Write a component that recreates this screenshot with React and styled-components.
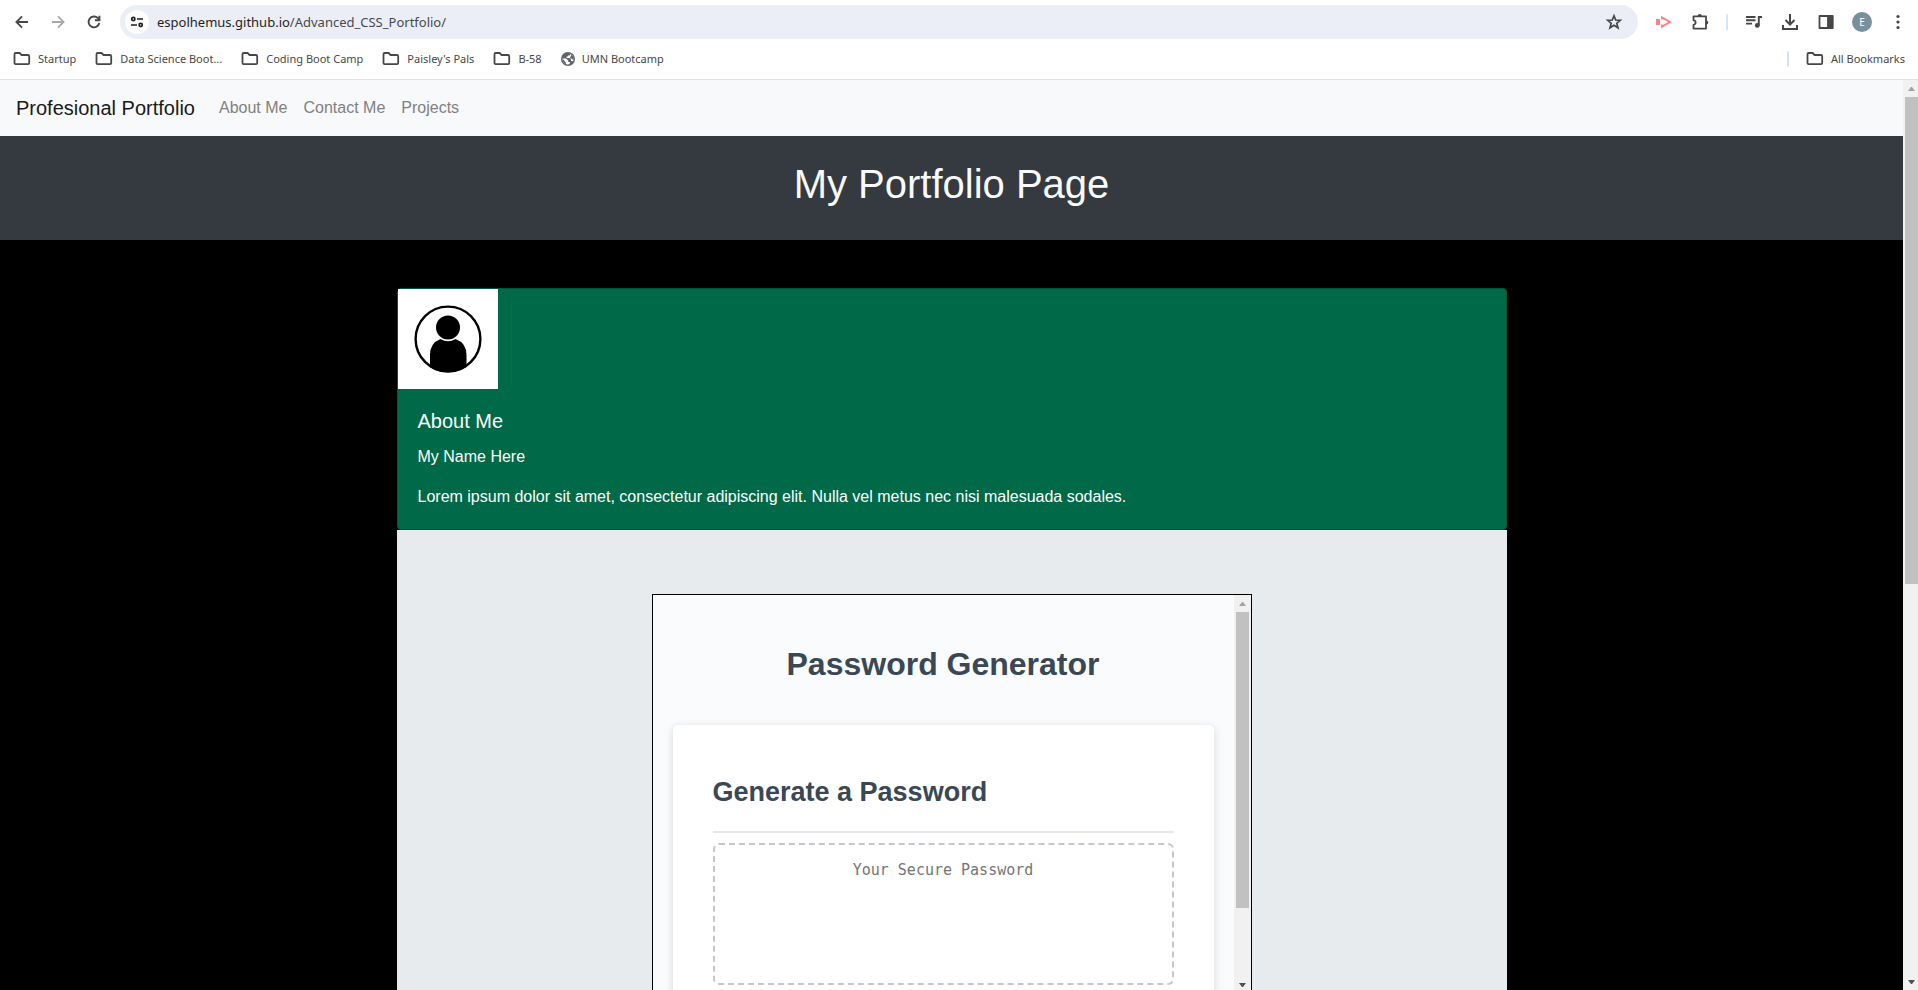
import React from "react";
import styled, { createGlobalStyle } from "styled-components";

const Global = createGlobalStyle`
  *, *::before, *::after { box-sizing: border-box; }
  html, body { margin: 0; height: 100%; }
  body { font-family: "Liberation Sans", Arial, sans-serif; font-size: 16px; line-height: 24px; color: #212529; overflow: hidden; background: #fff; }
  h1, h2, p { margin: 0; }
  a { color: inherit; text-decoration: none; }
  button { border: 0; padding: 0; background: none; font: inherit; color: inherit; }
  svg { display: block; flex: none; }
`;

const Window = styled.div`
  display: flex;
  flex-direction: column;
  height: 100vh;
`;

/* ---------- browser chrome ---------- */

const Chrome = styled.header`
  flex: none;
  border-bottom: 1px solid #dfe1e5;
  background: #fff;
  color: #474747;
  font-family: "Noto Sans", "Open Sans", sans-serif;
`;

const Toolbar = styled.div`
  display: flex;
  align-items: center;
  height: 44px;
  padding: 0 2px 0 4px;
`;

const IconButton = styled.button`
  display: grid;
  place-items: center;
  flex: none;
  width: 36px;
  height: 34px;
  color: ${(p) => (p.$dim ? "#a9a9a9" : "#474747")};
`;

const NavButtons = styled.div`
  display: flex;
  margin-right: 8px;
`;

const AddressBar = styled.form`
  display: flex;
  align-items: center;
  flex: 1;
  height: 34px;
  padding: 0 6px 0 5px;
  border-radius: 17px;
  background: #ebeef7;
`;

const SiteInfo = styled.button`
  display: grid;
  place-items: center;
  width: 24px;
  height: 24px;
  border-radius: 50%;
  background: #fff;
  color: #1f1f1f;
`;

const Url = styled.p`
  flex: 1;
  margin: 0 8px;
  font-size: 13px;
  line-height: 20px;
  color: #47494d;
  b { font-weight: 400; color: #1f1f1f; }
`;

const Separator = styled.span`
  flex: none;
  width: 2px;
  height: 16px;
  margin: ${(p) => p.$margin};
  border-radius: 1px;
  background: #d3e3fd;
`;

const Actions = styled.div`
  display: flex;
  align-items: center;
  margin-left: 8px;
`;

const Avatar = styled.span`
  display: grid;
  place-items: center;
  width: 20px;
  height: 20px;
  border-radius: 50%;
  background: #78909c;
  color: #fff;
  font-size: 10px;
  line-height: 20px;
`;

const Bookmarks = styled.nav`
  display: flex;
  align-items: center;
  height: 35px;
  padding: 0 13px 5px;
  gap: 19px;
`;

const Bookmark = styled.a`
  display: flex;
  align-items: center;
  gap: 7px;
  font-size: 11px;
  line-height: 16px;
  white-space: nowrap;
`;

const Spacer = styled.span`
  flex: 1;
`;

/* ---------- scroll bars ---------- */

const Track = styled.div`
  display: flex;
  flex-direction: column;
  flex: none;
  width: ${(p) => p.$width}px;
  padding-left: 2px;
  padding-right: ${(p) => p.$width - 15}px;
  background: #f1f1f1;
`;

const TrackButton = styled.button`
  display: grid;
  place-items: center;
  flex: none;
  height: 17px;
  color: ${(p) => (p.$active ? "#505050" : "#a3a3a3")};
`;

const Lane = styled.div`
  display: flex;
  flex-direction: column;
  flex: 1;
`;

const Thumb = styled.div`
  flex: ${(p) => p.$shown};
  background: #c1c1c1;
`;

const Rest = styled.div`
  flex: ${(p) => p.$hidden};
`;

function ScrollBar({ width, shown, hidden }) {
  return (
    <Track $width={width}>
      <TrackButton aria-label="Scroll up">
        <svg width="7" height="4" viewBox="0 0 7 4"><path d="M0 4 3 0h1l3 4z" fill="currentColor" /></svg>
      </TrackButton>
      <Lane>
        <Thumb $shown={shown} />
        <Rest $hidden={hidden} />
      </Lane>
      <TrackButton $active aria-label="Scroll down">
        <svg width="7" height="4" viewBox="0 0 7 4"><path d="M0 0h7L4 4H3z" fill="currentColor" /></svg>
      </TrackButton>
    </Track>
  );
}

/* ---------- page ---------- */

const Viewport = styled.div`
  display: flex;
  flex: 1;
  min-height: 0;
`;

const Page = styled.div`
  flex: 1;
  min-width: 0;
  overflow: hidden;
  background: #000;
`;

const NavBar = styled.nav`
  display: flex;
  align-items: center;
  height: 56px;
  padding: 0 16px;
  gap: 16px;
  background: #f8f9fa;
`;

const Brand = styled.a`
  font-size: 20px;
  line-height: 30px;
  color: #1a1a1a;
  margin-right: 8px;
`;

const NavLink = styled.a`
  color: #808182;
`;

const Hero = styled.header`
  padding: 24px 24px 32px;
  background: #343a40;
  color: #f8f9fa;
  text-align: center;
  h1 { font-size: 40px; line-height: 48px; font-weight: 400; }
`;

const Container = styled.main`
  max-width: 1110px;
  margin: 48px auto 0;
`;

const Card = styled.section`
  border: 1px solid #005636;
  border-radius: 4px;
  background: #006947;
  color: #fff;
`;

const Portrait = styled.svg`
  width: 100px;
  height: 100px;
  background: #fff;
`;

const CardBody = styled.div`
  padding: 20px;
  h2 { font-size: 20px; line-height: 24px; font-weight: 400; margin-bottom: 12px; }
  p + p { margin-top: 16px; }
`;

const Showcase = styled.section`
  display: flex;
  justify-content: center;
  padding: 64px 0;
  background: #e8ebee;
`;

const Frame = styled.div`
  display: flex;
  width: 600px;
  height: 400px;
  border: 1px solid #000;
  background: #fafbfd;
`;

const FramePage = styled.div`
  flex: 1;
  min-width: 0;
  overflow: hidden;
  padding: 0 20px;
  color: #3a4754;
`;

const AppTitle = styled.h1`
  padding: 53px 0 45px;
  font-size: 32px;
  line-height: 32px;
  text-align: center;
`;

const Panel = styled.div`
  padding: 50px 40px 40px;
  border-radius: 5px;
  background: #fff;
  box-shadow: rgba(0, 0, 0, 0.15) 0 2px 9px;
`;

const PanelTitle = styled.h2`
  padding-bottom: 22px;
  border-bottom: 2px solid #e8e8e8;
  font-size: 27px;
  line-height: 34px;
`;

const Password = styled.textarea`
  display: block;
  width: 100%;
  height: 142px;
  margin-top: 10px;
  padding: 15px;
  border: 2px dashed #c2c8d2;
  border-radius: 6px;
  background: none;
  resize: none;
  overflow: hidden;
  text-align: center;
  font-family: "DejaVu Sans Mono", monospace;
  font-size: 15px;
  line-height: 20px;
  &::placeholder { color: #757575; }
`;

/* ---------- icons ---------- */

const Icon = ({ size = 20, box = 20, children, width = 2, ...rest }) => (
  <svg width={size} height={size} viewBox={`0 0 ${box} ${box}`} fill="none" stroke="currentColor" strokeWidth={width} aria-hidden="true" {...rest}>
    {children}
  </svg>
);

const Folder = () => (
  <svg width="18" height="14" viewBox="0 0 18 14" fill="none" stroke="#474747" strokeWidth="1.8" strokeLinejoin="round" aria-hidden="true">
    <path d="M1.5 2.2Q1.5 1 2.7 1H6.6L8.6 3H15Q16.2 3 16.2 4.2V11Q16.2 12.2 15 12.2H2.7Q1.5 12.2 1.5 11Z" />
  </svg>
);

const Globe = () => (
  <svg width="14" height="14" viewBox="0 0 14 14" aria-hidden="true">
    <circle cx="7" cy="7" r="7" fill="#5f6368" />
    <path d="M1.4 6.6H5.2L7.2 8.4V10H9V11.2L7.4 12.6C4 12.6 1.4 10 1.4 6.6Z" fill="#fff" />
    <path d="M1.4 6.6 4.6 10.2 5.4 12.4C3 11.7 1.4 9.4 1.4 6.6Z" fill="#5f6368" />
    <path d="M7.2 1.4 9.4 1.8 8.8 3.4H7V4.6H5.6V6H8.4L10 7.6V9L12.2 9.2C13.4 6.4 12.4 3.4 9.6 1.9Z" fill="#fff" />
    <path d="M9.2 1.6 12.6 4.8V8.4L10.6 6.4H9V5L10.4 4Z" fill="#5f6368" />
  </svg>
);

const folders = ["Startup", "Data Science Boot...", "Coding Boot Camp", "Paisley's Pals", "B-58"];

function BrowserChrome() {
  return (
    <Chrome>
      <Toolbar>
        <NavButtons>
          <IconButton aria-label="Back"><Icon width={1.8}><path d="M16 10H5M10 4.4 4.4 10l5.6 5.6" /></Icon></IconButton>
          <IconButton $dim aria-label="Forward"><Icon width={1.8}><path d="M4 10h11M10 4.4 15.6 10 10 15.6" /></Icon></IconButton>
          <IconButton aria-label="Reload"><Icon width={1.9}><path d="M15.3 11A5.4 5.4 0 1 1 13.9 6.2L15.3 7.6M15.4 3.7V8.2H10.9" /></Icon></IconButton>
        </NavButtons>
        <AddressBar>
          <SiteInfo type="button" aria-label="View site information">
            <Icon size={14} box={14} width={1.7}><circle cx="3.3" cy="4" r="1.6" /><path d="M7 4h6M1 10h6" /><circle cx="10.7" cy="10" r="1.6" /></Icon>
          </SiteInfo>
          <Url><b>espolhemus.github.io</b>/Advanced_CSS_Portfolio/</Url>
          <IconButton type="button" aria-label="Bookmark this tab">
            <Icon width={1.7}><path d="M10 3.7 11.7 8l4.6.3-3.5 3 1.2 4.5L10 13.3l-4 2.5 1.2-4.5-3.5-3L8.3 8z" /></Icon>
          </IconButton>
        </AddressBar>
        <Actions>
          <IconButton aria-label="Screen recorder">
            <svg width="18" height="14" viewBox="0 0 18 14" aria-hidden="true">
              <path d="M1 4h4v6H1z" fill="#ff8080" />
              <path d="M7 4.6V2.4L15 7 7 11.6V9.4" fill="none" stroke="#ff8080" strokeWidth="2" />
            </svg>
          </IconButton>
          <IconButton aria-label="Extensions">
            <Icon width={1.8} strokeLinejoin="round">
              <path d="M3.5 4.4H16V16.6H3.5V12.8Q5.6 12.4 5.6 10.5T3.5 8.2Z" />
              <path d="M7.6 4.2a2.1 2.1 0 0 1 4.2 0zM16.2 8.4a2.1 2.1 0 0 1 0 4.2z" fill="currentColor" stroke="none" />
            </Icon>
          </IconButton>
          <Separator $margin="0 8px" />
          <IconButton aria-label="Media controls">
            <Icon width={1.9}><path d="M2 5h9.5M2 8.3h9.5M2 11.6h6M14.8 13.5V5H18" /><circle cx="13.3" cy="13.4" r="2.4" fill="currentColor" stroke="none" /></Icon>
          </IconButton>
          <IconButton aria-label="Downloads">
            <Icon width={2}><path d="M10 2v10M5.5 8 10 12.5 14.5 8M3 13v4h14v-4" /></Icon>
          </IconButton>
          <IconButton aria-label="Side panel">
            <Icon width={1.8} strokeLinejoin="round"><rect x="3.5" y="4" width="13" height="12" /><path d="M12 4h4.5v12H12z" fill="currentColor" /></Icon>
          </IconButton>
          <IconButton aria-label="Profile"><Avatar>E</Avatar></IconButton>
          <IconButton aria-label="Menu">
            <Icon stroke="none" fill="currentColor"><circle cx="10" cy="4.5" r="1.6" /><circle cx="10" cy="10" r="1.6" /><circle cx="10" cy="15.5" r="1.6" /></Icon>
          </IconButton>
        </Actions>
      </Toolbar>
      <Bookmarks aria-label="Bookmarks">
        {folders.map((name) => (
          <Bookmark key={name} href="#"><Folder />{name}</Bookmark>
        ))}
        <Bookmark href="#"><Globe />UMN Bootcamp</Bookmark>
        <Spacer />
        <Separator $margin="0 -2px" />
        <Bookmark href="#"><Folder />All Bookmarks</Bookmark>
      </Bookmarks>
    </Chrome>
  );
}

export default function App() {
  return (
    <Window>
      <Global />
      <BrowserChrome />
      <Viewport>
        <Page>
          <NavBar>
            <Brand href="#">Profesional Portfolio</Brand>
            <NavLink href="#about">About Me</NavLink>
            <NavLink href="#contact">Contact Me</NavLink>
            <NavLink href="#projects">Projects</NavLink>
          </NavBar>
          <Hero><h1>My Portfolio Page</h1></Hero>
          <Container>
            <Card id="about">
              <Portrait viewBox="0 0 100 100" role="img" aria-label="Portrait">
                <clipPath id="ring"><circle cx="50" cy="50" r="33.5" /></clipPath>
                <circle cx="50" cy="50" r="32.4" fill="none" stroke="#000" strokeWidth="2.4" />
                <path clipPath="url(#ring)" d="M32 90V66Q32 54 42.5 50Q50 54.5 57.5 50Q68.5 54 68.5 66V90z" />
                <circle cx="50" cy="38.5" r="12" />
              </Portrait>
              <CardBody>
                <h2>About Me</h2>
                <p>My Name Here</p>
                <p>Lorem ipsum dolor sit amet, consectetur adipiscing elit. Nulla vel metus nec nisi malesuada sodales.</p>
              </CardBody>
            </Card>
            <Showcase id="projects">
              <Frame>
                <FramePage>
                  <AppTitle>Password Generator</AppTitle>
                  <Panel>
                    <PanelTitle>Generate a Password</PanelTitle>
                    <Password readOnly placeholder="Your Secure Password" aria-label="Generated Password" />
                  </Panel>
                </FramePage>
                <ScrollBar width={17} shown={13} hidden={3} />
              </Frame>
            </Showcase>
          </Container>
        </Page>
        <ScrollBar width={15} shown={5} hidden={4} />
      </Viewport>
    </Window>
  );
}
